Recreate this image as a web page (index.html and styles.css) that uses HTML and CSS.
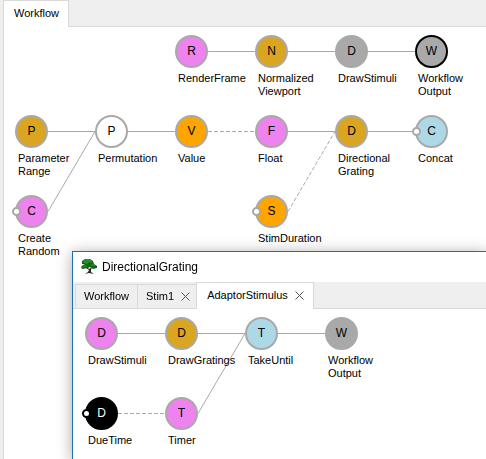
FILE: index.html
```html
<!DOCTYPE html>
<html lang="en">
<head>
<meta charset="utf-8">
<title>Workflow</title>
<link rel="stylesheet" href="styles.css">
</head>
<body>
<main class="editor">
  <nav class="tabs">
    <button class="tab active">Workflow</button>
  </nav>
  <section class="canvas">
    <svg class="edges" aria-hidden="true">
      <path d="M193 16.500H400M33 96.500H193M273 96.500H400M33 176.500L80 96.500"/>
      <path class="dashed" d="M193 96.500H240M273 176.500L320 96.500"/>
    </svg>
    <div class="node r1 c3"><span class="dot violet">R</span><span class="label">RenderFrame</span></div>
    <div class="node r1 c4"><span class="dot gold">N</span><span class="label">Normalized<br>Viewport</span></div>
    <div class="node r1 c5"><span class="dot gray">D</span><span class="label">DrawStimuli</span></div>
    <div class="node r1 c6"><span class="dot gray selected">W</span><span class="label">Workflow<br>Output</span></div>
    <div class="node r2 c1"><span class="dot gold">P</span><span class="label">Parameter<br>Range</span></div>
    <div class="node r2 c2"><span class="dot white">P</span><span class="label">Permutation</span></div>
    <div class="node r2 c3"><span class="dot orange">V</span><span class="label">Value</span></div>
    <div class="node r2 c4"><span class="dot violet">F</span><span class="label">Float</span></div>
    <div class="node r2 c5"><span class="dot gold">D</span><span class="label">Directional<br>Grating</span></div>
    <div class="node r2 c6"><span class="dot blue port">C</span><span class="label">Concat</span></div>
    <div class="node r3 c1"><span class="dot violet port">C</span><span class="label">Create<br>Random</span></div>
    <div class="node r3 c4"><span class="dot orange port">S</span><span class="label">StimDuration</span></div>
  </section>
</main>

<section class="window">
  <header class="titlebar">
    <svg class="tree" viewBox="0 0 16 16" aria-hidden="true">
      <path fill="#30251f" d="M6 8L8 10L11 8L10 11L10 13L13 15L8 14L4 15L7 13L8 11L5 9Z"/>
      <path fill="#14651a" d="M1 2L4 0H9L12 2L13 5L16 7V9L12 10L9 8L7 9L1 10L0 8L2 6L4 5L1 5Z"/>
      <path fill="#23902a" d="M2 2L5 0H8L11 2L11 4L8 3L6 5L3 4ZM1 8L4 6L6 7L3 8ZM9 6L12 5L15 7L12 7Z"/>
    </svg>
    <h1 class="title">DirectionalGrating</h1>
  </header>
  <nav class="tabs">
    <button class="tab">Workflow</button>
    <button class="tab closable">Stim1
      <svg class="close" viewBox="0 0 9 9" aria-hidden="true"><path d="M.5.5l8 8M8.500.5l-8 8"/></svg>
    </button>
    <button class="tab closable active">AdaptorStimulus
      <svg class="close" viewBox="0 0 9 9" aria-hidden="true"><path d="M.5.5l8 8M8.500.5l-8 8"/></svg>
    </button>
  </nav>
  <section class="canvas">
    <svg class="edges" aria-hidden="true">
      <path d="M33 16.500H240M113 96.500L160 16.500"/>
      <path class="dashed" d="M33 96.500H80"/>
    </svg>
    <div class="node r1 c1"><span class="dot violet">D</span><span class="label">DrawStimuli</span></div>
    <div class="node r1 c2"><span class="dot gold">D</span><span class="label">DrawGratings</span></div>
    <div class="node r1 c3"><span class="dot blue">T</span><span class="label">TakeUntil</span></div>
    <div class="node r1 c4"><span class="dot gray">W</span><span class="label">Workflow<br>Output</span></div>
    <div class="node r2 c1"><span class="dot black port">D</span><span class="label">DueTime</span></div>
    <div class="node r2 c2"><span class="dot violet">T</span><span class="label">Timer</span></div>
  </section>
</section>
</body>
</html>
```

FILE: styles.css
```css
*,
*::before {
  box-sizing: border-box;
}

body {
  margin: 0;
  min-height: 100vh;
  overflow: hidden;
  background: #efefef;
  color: #000;
  font: 11px/13px "Liberation Sans", Arial, sans-serif;
}

.editor {
  display: flex;
  flex-direction: column;
  min-height: 100vh;
  padding-left: 3px;
}

.tabs {
  display: flex;
  flex-shrink: 0;
  align-items: flex-end;
  height: 27px;
  background: #efefef;
  box-shadow: inset 0 -1px #d9d9d9;
}

.tab {
  display: flex;
  align-items: center;
  gap: 7px;
  height: 25px;
  margin: 0 0 0 -1px;
  padding: 0 8px;
  border: 1px solid #d9d9d9;
  background: #efefef;
  color: #000;
  font: inherit;
}

.tab:first-child {
  margin-left: 0;
}

.tab.closable {
  padding: 0 6px 0 8px;
}

.tab.active {
  height: 27px;
  padding: 0 9px 2px 10px;
  border-bottom: 0;
  background: #fff;
}

.close {
  width: 9px;
  height: 9px;
  fill: none;
  stroke: #555;
}

.canvas {
  position: relative;
  display: grid;
  grid-template-columns: repeat(6, 80px);
  grid-auto-rows: 80px;
  flex: 1;
  background: #fff;
}

.editor .canvas {
  padding: 8px 0 0 11px;
  border-left: 1px solid #d9d9d9;
}

.window .canvas {
  padding: 8px 0 0 12px;
}

.edges {
  grid-area: 1 / 1 / 4 / 7;
  width: 100%;
  height: 100%;
  fill: none;
  stroke: #a9a9a9;
}

.dashed {
  stroke-dasharray: 4 2;
}

.node {
  position: relative;
  display: flex;
  flex-direction: column;
  gap: 4px;
}

.r1 { grid-row: 1; }
.r2 { grid-row: 2; }
.r3 { grid-row: 3; }
.c1 { grid-column: 1; }
.c2 { grid-column: 2; }
.c3 { grid-column: 3; }
.c4 { grid-column: 4; }
.c5 { grid-column: 5; }
.c6 { grid-column: 6; }

.dot {
  position: relative;
  display: flex;
  align-items: center;
  justify-content: center;
  width: 33px;
  height: 33px;
  border: 2px solid #a9a9a9;
  border-radius: 50%;
  font-size: 12px;
}

.violet { background: #ee82ee; }
.gold { background: #daa520; }
.gray { background: #a9a9a9; }
.white { background: #fff; }
.orange { background: #ffa500; }
.blue { background: #add8e6; }
.black { background: #000; border-color: #000; color: #fff; }
.selected { border-color: #000; }

.port::before {
  content: "";
  position: absolute;
  top: 10px;
  left: -5px;
  width: 9px;
  height: 9px;
  border: 2px solid #a9a9a9;
  border-radius: 50%;
  background: #fff;
}

.black.port::before {
  border-color: #000;
}

.label {
  padding-left: 3px;
  white-space: nowrap;
}

.window {
  position: fixed;
  top: 251px;
  left: 72px;
  right: -1px;
  bottom: -1px;
  display: flex;
  flex-direction: column;
  border: 1px solid #1a70b4;
  background: #fff;
  box-shadow: 0 2px 14px rgba(0, 0, 0, 0.35);
}

.titlebar {
  display: flex;
  flex-shrink: 0;
  align-items: center;
  gap: 5px;
  height: 30px;
  padding-left: 8px;
}

.tree {
  width: 16px;
  height: 16px;
}

.title {
  margin: 0;
  font: 12px/16px "Liberation Sans", Arial, sans-serif;
}

.window .tabs {
  padding-left: 2px;
}
```
